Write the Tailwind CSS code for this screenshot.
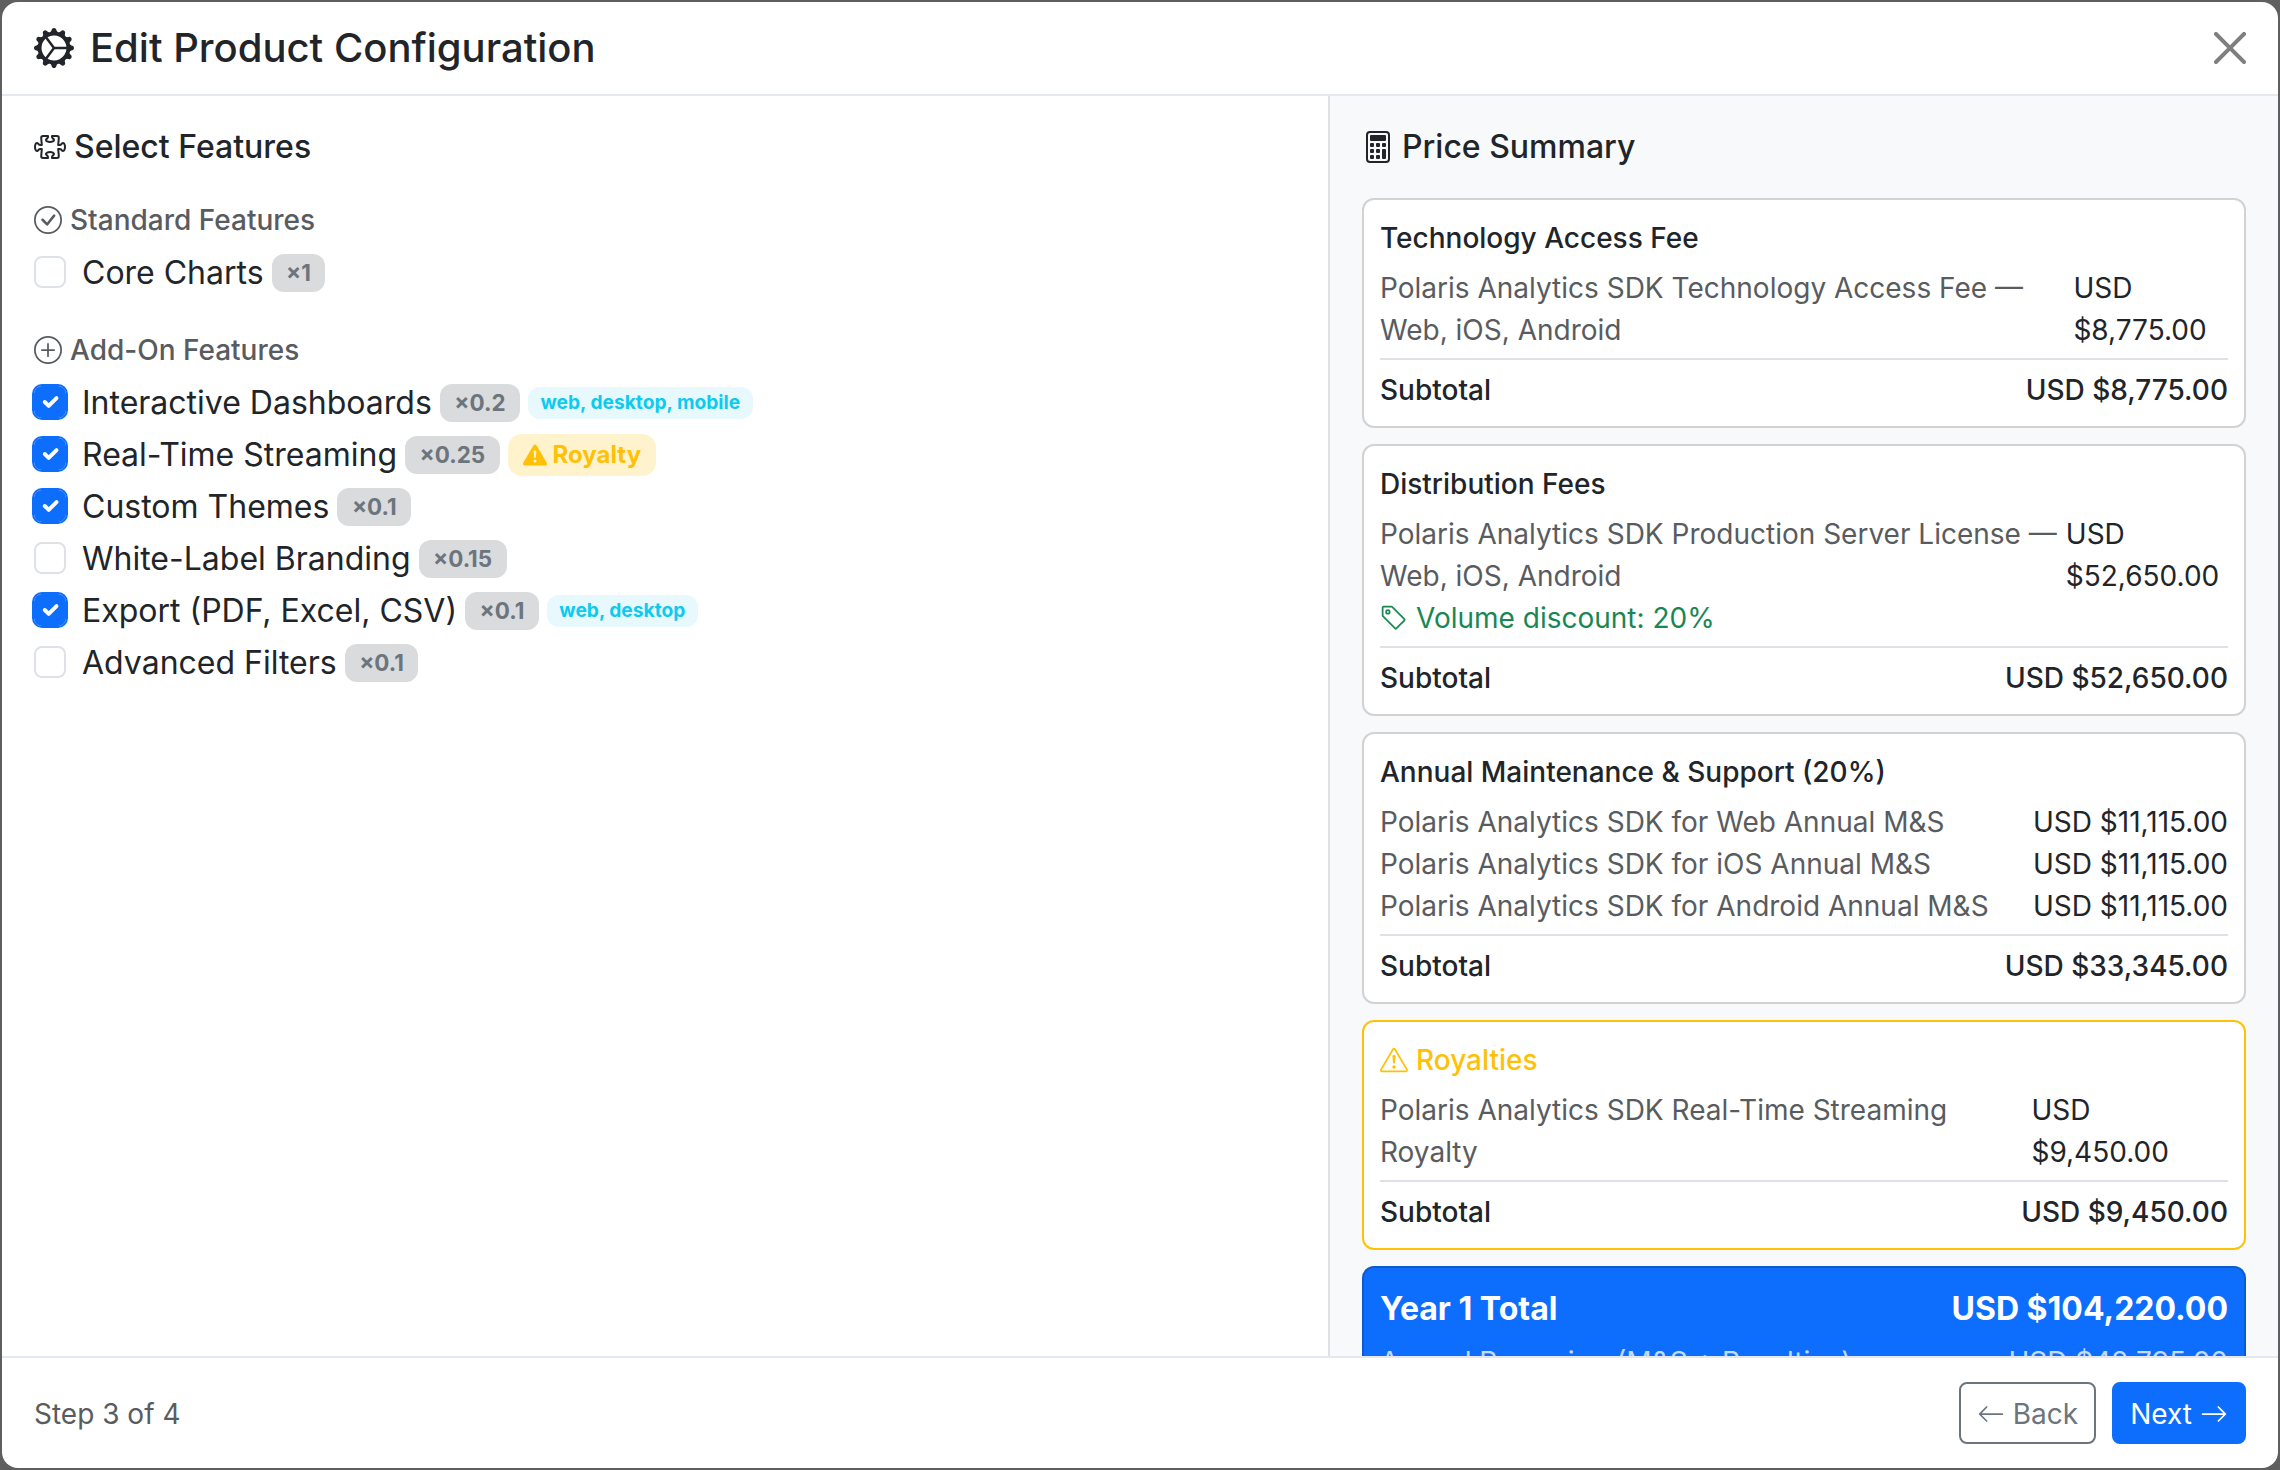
<!DOCTYPE html>
<html lang="en">

<head>
    <meta charset="UTF-8">
    <meta name="viewport" content="width=device-width, initial-scale=1.0">
    <script src="https://cdn.jsdelivr.net/npm/@tailwindcss/browser@4"></script>
    <title>Edit Product Configuration</title>
</head>

<body class="bg-[#5f5f5f] font-['Inter',sans-serif] text-[#212529]">
    <div class="h-[1470px] w-[2280px] p-[2px]">
        <div class="flex h-full flex-col overflow-hidden rounded-[16px] bg-white">

            <!-- header -->
            <header class="flex h-[94px] shrink-0 items-center justify-between border-b-2 border-[#e4e8f1] pl-[32px] pr-[32px]">
                <h1 class="flex items-center gap-[16px] text-[40px] font-medium leading-[48px]">
                    <svg xmlns="http://www.w3.org/2000/svg" class="h-[40px] w-[40px]" viewBox="0 0 16 16" fill="currentColor">
                        <path d="M7.068.727c.243-.97 1.62-.97 1.864 0l.071.286a.96.96 0 0 0 1.622.434l.205-.211c.695-.719 1.888-.03 1.613.931l-.08.284a.96.96 0 0 0 1.187 1.187l.283-.081c.96-.275 1.65.918.931 1.613l-.211.205a.96.96 0 0 0 .434 1.622l.286.071c.97.243.97 1.62 0 1.864l-.286.071a.96.96 0 0 0-.434 1.622l.211.205c.719.695.03 1.888-.931 1.613l-.284-.08a.96.96 0 0 0-1.187 1.187l.081.283c.275.96-.918 1.65-1.613.931l-.205-.211a.96.96 0 0 0-1.622.434l-.071.286c-.243.97-1.62.97-1.864 0l-.071-.286a.96.96 0 0 0-1.622-.434l-.205.211c-.695.719-1.888.03-1.613-.931l.08-.284a.96.96 0 0 0-1.186-1.187l-.284.081c-.96.275-1.65-.918-.931-1.613l.211-.205a.96.96 0 0 0-.434-1.622l-.286-.071c-.97-.243-.97-1.62 0-1.864l.286-.071a.96.96 0 0 0 .434-1.622l-.211-.205c-.719-.695-.03-1.888.931-1.613l.284.08a.96.96 0 0 0 1.187-1.186l-.081-.284c-.275-.96.918-1.65 1.613-.931l.205.211a.96.96 0 0 0 1.622-.434l.071-.286zM12.973 8.5H8.25l-2.834 3.779A4.998 4.998 0 0 0 12.973 8.5zm0-1a4.998 4.998 0 0 0-7.557-3.779l2.834 3.78h4.723zM5.048 3.967c-.03.021-.058.043-.087.065l.087-.065zm-.431.355A4.984 4.984 0 0 0 3.002 8c0 1.455.622 2.765 1.615 3.678L7.375 8 4.617 4.322zm.344 7.646.087.065-.087-.065z" />
                    </svg>
                    Edit Product Configuration
                </h1>
                <button class="text-[#7f7f7f]">
                    <svg xmlns="http://www.w3.org/2000/svg" class="h-[32px] w-[32px]" viewBox="0 0 16 16" fill="currentColor">
                        <path d="M.293.293a1 1 0 0 1 1.414 0L8 6.586 14.293.293a1 1 0 1 1 1.414 1.414L9.414 8l6.293 6.293a1 1 0 0 1-1.414 1.414L8 9.414l-6.293 6.293a1 1 0 0 1-1.414-1.414L6.586 8 .293 1.707a1 1 0 0 1 0-1.414z" />
                    </svg>
                </button>
            </header>

            <div class="flex min-h-0 flex-1">

                <!-- features -->
                <section class="w-[1328px] shrink-0 border-r-2 border-[#dee2e6] p-[32px]">
                    <h2 class="mb-[32px] flex h-[38px] items-center gap-[8px] text-[32px] font-medium">
                        <svg xmlns="http://www.w3.org/2000/svg" class="h-[32px] w-[32px]" viewBox="0 0 16 16" fill="currentColor">
                            <path d="M3.112 3.645A1.5 1.5 0 0 1 4.605 2H7a.5.5 0 0 1 .5.5v.382c0 .696-.497 1.182-.872 1.469a.459.459 0 0 0-.115.118.113.113 0 0 0-.012.025L6.5 4.5v.003l.003.01c.004.01.014.028.036.053a.86.86 0 0 0 .27.194C7.09 4.9 7.51 5 8 5c.492 0 .912-.1 1.19-.24a.86.86 0 0 0 .271-.194.213.213 0 0 0 .039-.063v-.009a.112.112 0 0 0-.012-.025.459.459 0 0 0-.115-.118c-.375-.287-.872-.773-.872-1.469V2.5A.5.5 0 0 1 9 2h2.395a1.5 1.5 0 0 1 1.493 1.645L12.645 6.5h.237c.195 0 .42-.147.675-.48.21-.274.528-.52.943-.52.568 0 .947.447 1.154.862C15.877 6.807 16 7.387 16 8s-.123 1.193-.346 1.638c-.207.415-.586.862-1.154.862-.415 0-.733-.246-.943-.52-.255-.333-.48-.48-.675-.48h-.237l.243 2.855A1.5 1.5 0 0 1 11.395 14H9a.5.5 0 0 1-.5-.5v-.382c0-.696.497-1.182.872-1.469a.459.459 0 0 0 .115-.118.113.113 0 0 0 .012-.025L9.5 11.5v-.003a.214.214 0 0 0-.039-.064.859.859 0 0 0-.27-.193C8.91 11.1 8.49 11 8 11c-.491 0-.912.1-1.19.24a.859.859 0 0 0-.271.194.214.214 0 0 0-.039.063v.003l.001.006a.113.113 0 0 0 .012.025c.016.027.05.068.115.118.375.287.872.773.872 1.469v.382a.5.5 0 0 1-.5.5H4.605a1.5 1.5 0 0 1-1.493-1.645L3.356 9.5h-.238c-.195 0-.42.147-.675.48-.21.274-.528.52-.943.52-.568 0-.947-.447-1.154-.862C.123 9.193 0 8.613 0 8s.123-1.193.346-1.638C.553 5.947.932 5.5 1.5 5.5c.415 0 .733.246.943.52.255.333.48.48.675.48h.238l-.244-2.855zM4.605 3a.5.5 0 0 0-.498.55l.001.007.29 3.4A.5.5 0 0 1 3.9 7.5h-.782c-.696 0-1.182-.497-1.469-.872a.459.459 0 0 0-.118-.115.112.112 0 0 0-.025-.012L1.5 6.5h-.003a.213.213 0 0 0-.064.039.86.86 0 0 0-.193.27C1.1 7.09 1 7.51 1 8c0 .491.1.912.24 1.19.07.14.14.225.194.271a.214.214 0 0 0 .063.039H1.5l.006-.001a.112.112 0 0 0 .025-.012.459.459 0 0 0 .118-.115c.287-.375.773-.872 1.469-.872H3.9a.5.5 0 0 1 .498.542l-.29 3.408a.5.5 0 0 0 .497.55h1.878c-.048-.166-.195-.352-.463-.557-.274-.21-.52-.528-.52-.943 0-.568.447-.947.862-1.154C6.807 10.123 7.387 10 8 10s1.193.123 1.638.346c.415.207.862.586.862 1.154 0 .415-.246.733-.52.943-.268.205-.415.39-.463.557h1.878a.5.5 0 0 0 .498-.55l-.001-.007-.29-3.4A.5.5 0 0 1 12.1 8.5h.782c.696 0 1.182.497 1.469.872.05.065.091.099.118.115.013.008.021.01.025.012a.02.02 0 0 0 .006.001h.003a.214.214 0 0 0 .064-.039.86.86 0 0 0 .193-.27c.14-.28.24-.7.24-1.191 0-.492-.1-.912-.24-1.19a.86.86 0 0 0-.194-.271.215.215 0 0 0-.063-.039H14.5l-.006.001a.113.113 0 0 0-.025.012.459.459 0 0 0-.118.115c-.287.375-.773.872-1.469.872H12.1a.5.5 0 0 1-.498-.543l.29-3.407a.5.5 0 0 0-.497-.55H9.517c.048.166.195.352.463.557.274.21.52.528.52.943 0 .568-.447.947-.862 1.154C9.193 5.877 8.613 6 8 6s-1.193-.123-1.638-.346C5.947 5.447 5.5 5.068 5.5 4.5c0-.415.246-.733.52-.943.268-.205.415-.39.463-.557H4.605z" />
                        </svg>
                        Select Features
                    </h2>

                    <div class="mb-[30px]">
                        <h3 class="mb-[7px] flex items-center gap-[8px] pt-[1px] text-[28px] font-medium leading-[42px] text-[#595c5f]">
                            <svg xmlns="http://www.w3.org/2000/svg" class="h-[28px] w-[28px]" viewBox="0 0 16 16" fill="currentColor">
                                <path d="M8 15A7 7 0 1 1 8 1a7 7 0 0 1 0 14zm0 1A8 8 0 1 0 8 0a8 8 0 0 0 0 16z" />
                                <path d="M10.97 4.97a.235.235 0 0 0-.02.022L7.477 9.417 5.384 7.323a.75.75 0 0 0-1.06 1.06L6.97 11.03a.75.75 0 0 0 1.079-.02l3.992-4.99a.75.75 0 0 0-1.071-1.05z" />
                            </svg>
                            Standard Features
                        </h3>
                        <div class="mb-[2px] flex h-[50px] items-center text-[32px] leading-[48px]">
                            <span class="mb-[2px] mr-[16px] h-[32px] w-[32px] rounded-[8px] border-2 border-[#dee2e6] bg-white"></span>
                            <span>Core Charts</span>
                            <span class="ml-[8px] rounded-[12px] bg-[#d9dbdd] px-[14.5px] py-[7.8px] text-[22.4px] font-bold leading-none text-[#6c757d]">×1</span>
                        </div>
                    </div>

                    <div>
                        <h3 class="mb-[7px] flex items-center gap-[8px] pt-[1px] text-[28px] font-medium leading-[42px] text-[#595c5f]">
                            <svg xmlns="http://www.w3.org/2000/svg" class="h-[28px] w-[28px]" viewBox="0 0 16 16" fill="currentColor">
                                <path d="M8 15A7 7 0 1 1 8 1a7 7 0 0 1 0 14zm0 1A8 8 0 1 0 8 0a8 8 0 0 0 0 16z" />
                                <path d="M8 4a.5.5 0 0 1 .5.5v3h3a.5.5 0 0 1 0 1h-3v3a.5.5 0 0 1-1 0v-3h-3a.5.5 0 0 1 0-1h3v-3A.5.5 0 0 1 8 4z" />
                            </svg>
                            Add-On Features
                        </h3>

                        <div class="mb-[2px] flex h-[50px] items-center text-[32px] leading-[48px]">
                            <span class="mb-[2px] mr-[16px] flex h-[32px] w-[32px] items-center justify-center rounded-[8px] bg-[#0d6efd] outline-2 outline-[#0d6efd]">
                                <svg xmlns="http://www.w3.org/2000/svg" class="h-[26px] w-[26px]" viewBox="0 0 20 20" fill="none" stroke="#fff" stroke-width="3" stroke-linecap="round" stroke-linejoin="round"><path d="m6 10 3 3 6-6" /></svg>
                            </span>
                            <span>Interactive Dashboards</span>
                            <span class="ml-[8px] rounded-[12px] bg-[#d9dbdd] px-[14.5px] py-[7.8px] text-[22.4px] font-bold leading-none text-[#6c757d]">×0.2</span>
                            <span class="ml-[8px] rounded-[12px] bg-[#e7f9fd] px-[12.5px] py-[6.7px] text-[19.2px] font-bold leading-none text-[#0dcaf0]">web, desktop, mobile</span>
                        </div>

                        <div class="mb-[2px] flex h-[50px] items-center text-[32px] leading-[48px]">
                            <span class="mb-[2px] mr-[16px] flex h-[32px] w-[32px] items-center justify-center rounded-[8px] bg-[#0d6efd] outline-2 outline-[#0d6efd]">
                                <svg xmlns="http://www.w3.org/2000/svg" class="h-[26px] w-[26px]" viewBox="0 0 20 20" fill="none" stroke="#fff" stroke-width="3" stroke-linecap="round" stroke-linejoin="round"><path d="m6 10 3 3 6-6" /></svg>
                            </span>
                            <span>Real-Time Streaming</span>
                            <span class="ml-[8px] rounded-[12px] bg-[#d9dbdd] px-[14.5px] py-[7.8px] text-[22.4px] font-bold leading-none text-[#6c757d]">×0.25</span>
                            <span class="ml-[8px] flex items-center gap-[6px] rounded-[14px] bg-[#fff3cd] px-[15px] py-[8px] text-[24px] font-bold leading-[26px] text-[#ffc107]">
                                <svg xmlns="http://www.w3.org/2000/svg" class="h-[24px] w-[24px]" viewBox="0 0 16 16" fill="currentColor">
                                    <path d="M8.982 1.566a1.13 1.13 0 0 0-1.96 0L.165 13.233c-.457.778.091 1.767.98 1.767h13.713c.889 0 1.438-.99.98-1.767L8.982 1.566zM8 5c.535 0 .954.462.9.995l-.35 3.507a.552.552 0 0 1-1.1 0L7.1 5.995A.905.905 0 0 1 8 5zm.002 6a1 1 0 1 1 0 2 1 1 0 0 1 0-2z" />
                                </svg>
                                Royalty
                            </span>
                        </div>

                        <div class="mb-[2px] flex h-[50px] items-center text-[32px] leading-[48px]">
                            <span class="mb-[2px] mr-[16px] flex h-[32px] w-[32px] items-center justify-center rounded-[8px] bg-[#0d6efd] outline-2 outline-[#0d6efd]">
                                <svg xmlns="http://www.w3.org/2000/svg" class="h-[26px] w-[26px]" viewBox="0 0 20 20" fill="none" stroke="#fff" stroke-width="3" stroke-linecap="round" stroke-linejoin="round"><path d="m6 10 3 3 6-6" /></svg>
                            </span>
                            <span>Custom Themes</span>
                            <span class="ml-[8px] rounded-[12px] bg-[#d9dbdd] px-[14.5px] py-[7.8px] text-[22.4px] font-bold leading-none text-[#6c757d]">×0.1</span>
                        </div>

                        <div class="mb-[2px] flex h-[50px] items-center text-[32px] leading-[48px]">
                            <span class="mb-[2px] mr-[16px] h-[32px] w-[32px] rounded-[8px] border-2 border-[#dee2e6] bg-white"></span>
                            <span>White-Label Branding</span>
                            <span class="ml-[8px] rounded-[12px] bg-[#d9dbdd] px-[14.5px] py-[7.8px] text-[22.4px] font-bold leading-none text-[#6c757d]">×0.15</span>
                        </div>

                        <div class="mb-[2px] flex h-[50px] items-center text-[32px] leading-[48px]">
                            <span class="mb-[2px] mr-[16px] flex h-[32px] w-[32px] items-center justify-center rounded-[8px] bg-[#0d6efd] outline-2 outline-[#0d6efd]">
                                <svg xmlns="http://www.w3.org/2000/svg" class="h-[26px] w-[26px]" viewBox="0 0 20 20" fill="none" stroke="#fff" stroke-width="3" stroke-linecap="round" stroke-linejoin="round"><path d="m6 10 3 3 6-6" /></svg>
                            </span>
                            <span>Export (PDF, Excel, CSV)</span>
                            <span class="ml-[8px] rounded-[12px] bg-[#d9dbdd] px-[14.5px] py-[7.8px] text-[22.4px] font-bold leading-none text-[#6c757d]">×0.1</span>
                            <span class="ml-[8px] rounded-[12px] bg-[#e7f9fd] px-[12.5px] py-[6.7px] text-[19.2px] font-bold leading-none text-[#0dcaf0]">web, desktop</span>
                        </div>

                        <div class="mb-[2px] flex h-[50px] items-center text-[32px] leading-[48px]">
                            <span class="mb-[2px] mr-[16px] h-[32px] w-[32px] rounded-[8px] border-2 border-[#dee2e6] bg-white"></span>
                            <span>Advanced Filters</span>
                            <span class="ml-[8px] rounded-[12px] bg-[#d9dbdd] px-[14.5px] py-[7.8px] text-[22.4px] font-bold leading-none text-[#6c757d]">×0.1</span>
                        </div>
                    </div>
                </section>

                <!-- price summary -->
                <aside class="min-w-0 flex-1 overflow-hidden bg-[#f8f9fa] p-[32px]">
                    <h2 class="mb-[32px] flex h-[38px] items-center gap-[8px] text-[32px] font-medium">
                        <svg xmlns="http://www.w3.org/2000/svg" class="h-[32px] w-[32px]" viewBox="0 0 16 16" fill="currentColor">
                            <path d="M12 1a1 1 0 0 1 1 1v12a1 1 0 0 1-1 1H4a1 1 0 0 1-1-1V2a1 1 0 0 1 1-1h8zM4 0a2 2 0 0 0-2 2v12a2 2 0 0 0 2 2h8a2 2 0 0 0 2-2V2a2 2 0 0 0-2-2H4z" />
                            <path d="M4 2.5a.5.5 0 0 1 .5-.5h7a.5.5 0 0 1 .5.5v2a.5.5 0 0 1-.5.5h-7a.5.5 0 0 1-.5-.5v-2zm0 4a.5.5 0 0 1 .5-.5h1a.5.5 0 0 1 .5.5v1a.5.5 0 0 1-.5.5h-1a.5.5 0 0 1-.5-.5v-1zm0 3a.5.5 0 0 1 .5-.5h1a.5.5 0 0 1 .5.5v1a.5.5 0 0 1-.5.5h-1a.5.5 0 0 1-.5-.5v-1zm0 3a.5.5 0 0 1 .5-.5h1a.5.5 0 0 1 .5.5v1a.5.5 0 0 1-.5.5h-1a.5.5 0 0 1-.5-.5v-1zm3-6a.5.5 0 0 1 .5-.5h1a.5.5 0 0 1 .5.5v1a.5.5 0 0 1-.5.5h-1a.5.5 0 0 1-.5-.5v-1zm0 3a.5.5 0 0 1 .5-.5h1a.5.5 0 0 1 .5.5v1a.5.5 0 0 1-.5.5h-1a.5.5 0 0 1-.5-.5v-1zm0 3a.5.5 0 0 1 .5-.5h1a.5.5 0 0 1 .5.5v1a.5.5 0 0 1-.5.5h-1a.5.5 0 0 1-.5-.5v-1zm3-6a.5.5 0 0 1 .5-.5h1a.5.5 0 0 1 .5.5v1a.5.5 0 0 1-.5.5h-1a.5.5 0 0 1-.5-.5v-1zm0 3a.5.5 0 0 1 .5-.5h1a.5.5 0 0 1 .5.5v4a.5.5 0 0 1-.5.5h-1a.5.5 0 0 1-.5-.5v-4z" />
                        </svg>
                        Price Summary
                    </h2>

                    <div class="mb-[16px] rounded-[12px] border-2 border-[#d2d2d2] bg-white px-[16px] pb-[15px] pt-[17px] text-[28px] leading-[42px]">
                        <h3 class="mb-[8px] font-medium">Technology Access Fee</h3>
                        <div class="flex justify-between gap-[4px]">
                            <span class="text-[#595c5f]">Polaris Analytics SDK Technology Access Fee — Web, iOS, Android</span>
                            <span>USD $8,775.00</span>
                        </div>
                        <div class="mt-[7px] flex justify-between border-t-2 border-[#dee2e6] pt-[9px] font-medium">
                            <span>Subtotal</span>
                            <span>USD $8,775.00</span>
                        </div>
                    </div>

                    <div class="mb-[16px] rounded-[12px] border-2 border-[#d2d2d2] bg-white px-[16px] pb-[15px] pt-[17px] text-[28px] leading-[42px]">
                        <h3 class="mb-[8px] font-medium">Distribution Fees</h3>
                        <div class="flex justify-between gap-[4px]">
                            <span class="text-[#595c5f]">Polaris Analytics SDK Production Server License — Web, iOS, Android</span>
                            <span>USD $52,650.00</span>
                        </div>
                        <div class="flex items-center gap-[8px] text-[#198754]">
                            <svg xmlns="http://www.w3.org/2000/svg" class="h-[28px] w-[28px]" viewBox="0 0 16 16" fill="currentColor">
                                <path d="M6 4.5a1.5 1.5 0 1 1-3 0 1.5 1.5 0 0 1 3 0zm-1 0a.5.5 0 1 0-1 0 .5.5 0 0 0 1 0z" />
                                <path d="M2 1h4.586a1 1 0 0 1 .707.293l7 7a1 1 0 0 1 0 1.414l-4.586 4.586a1 1 0 0 1-1.414 0l-7-7A1 1 0 0 1 1 6.586V2a1 1 0 0 1 1-1zm0 5.586 7 7L13.586 9l-7-7H2v4.586z" />
                            </svg>
                            Volume discount: 20%
                        </div>
                        <div class="mt-[7px] flex justify-between border-t-2 border-[#dee2e6] pt-[9px] font-medium">
                            <span>Subtotal</span>
                            <span>USD $52,650.00</span>
                        </div>
                    </div>

                    <div class="mb-[16px] rounded-[12px] border-2 border-[#d2d2d2] bg-white px-[16px] pb-[15px] pt-[17px] text-[28px] leading-[42px]">
                        <h3 class="mb-[8px] font-medium">Annual Maintenance &amp; Support (20%)</h3>
                        <div class="flex justify-between gap-[4px]">
                            <span class="text-[#595c5f]">Polaris Analytics SDK for Web Annual M&amp;S</span>
                            <span>USD $11,115.00</span>
                        </div>
                        <div class="flex justify-between gap-[4px]">
                            <span class="text-[#595c5f]">Polaris Analytics SDK for iOS Annual M&amp;S</span>
                            <span>USD $11,115.00</span>
                        </div>
                        <div class="flex justify-between gap-[4px]">
                            <span class="text-[#595c5f]">Polaris Analytics SDK for Android Annual M&amp;S</span>
                            <span>USD $11,115.00</span>
                        </div>
                        <div class="mt-[7px] flex justify-between border-t-2 border-[#dee2e6] pt-[9px] font-medium">
                            <span>Subtotal</span>
                            <span>USD $33,345.00</span>
                        </div>
                    </div>

                    <div class="mb-[16px] rounded-[12px] border-2 border-[#ffc107] bg-white px-[16px] pb-[15px] pt-[17px] text-[28px] leading-[42px]">
                        <h3 class="mb-[8px] flex items-center gap-[8px] font-medium text-[#ffc107]">
                            <svg xmlns="http://www.w3.org/2000/svg" class="h-[28px] w-[28px]" viewBox="0 0 16 16" fill="currentColor">
                                <path d="M7.938 2.016A.13.13 0 0 1 8.002 2a.13.13 0 0 1 .063.016.146.146 0 0 1 .054.057l6.857 11.667c.036.06.035.124.002.183a.163.163 0 0 1-.054.06.116.116 0 0 1-.066.017H1.146a.115.115 0 0 1-.066-.017.163.163 0 0 1-.054-.06.176.176 0 0 1 .002-.183L7.884 2.073a.147.147 0 0 1 .054-.057zm1.044-.45a1.13 1.13 0 0 0-1.96 0L.165 13.233c-.457.778.091 1.767.98 1.767h13.713c.889 0 1.438-.99.98-1.767L8.982 1.566z" />
                                <path d="M7.002 12a1 1 0 1 1 2 0 1 1 0 0 1-2 0zM7.1 5.995a.905.905 0 1 1 1.8 0l-.35 3.507a.552.552 0 0 1-1.1 0L7.1 5.995z" />
                            </svg>
                            Royalties
                        </h3>
                        <div class="flex justify-between gap-[4px]">
                            <span class="text-[#595c5f]">Polaris Analytics SDK Real-Time Streaming Royalty</span>
                            <span>USD $9,450.00</span>
                        </div>
                        <div class="mt-[7px] flex justify-between border-t-2 border-[#dee2e6] pt-[9px] font-medium">
                            <span>Subtotal</span>
                            <span>USD $9,450.00</span>
                        </div>
                    </div>

                    <div class="rounded-[12px] border-2 border-black/[.175] bg-[#0d6efd] px-[16px] pb-[16px] pt-[17px] text-white">
                        <div class="mb-[8px] flex justify-between text-[32px] font-bold leading-[48px]">
                            <span>Year 1 Total</span>
                            <span>USD $104,220.00</span>
                        </div>
                        <div class="flex justify-between text-[28px] leading-[42px] text-white/75">
                            <span>Annual Recurring (M&amp;S + Royalties)</span>
                            <span>USD $42,795.00</span>
                        </div>
                    </div>
                </aside>
            </div>

            <!-- footer -->
            <footer class="flex h-[112px] shrink-0 items-center justify-between border-t-2 border-[#e4e8f1] px-[32px]">
                <span class="pt-[2px] text-[28px] leading-[42px] text-[#595c5f]">Step 3 of 4</span>
                <div class="flex gap-[16px]">
                    <button class="flex items-center gap-[8px] rounded-[8px] border-2 border-[#6c757d] px-[16px] pb-[7px] pt-[9px] text-[28px] leading-[42px] text-[#6c757d]">
                        <svg xmlns="http://www.w3.org/2000/svg" class="h-[28px] w-[28px]" viewBox="0 0 16 16" fill="currentColor">
                            <path d="M15 8a.5.5 0 0 0-.5-.5H2.707l3.147-3.146a.5.5 0 1 0-.708-.708l-4 4a.5.5 0 0 0 0 .708l4 4a.5.5 0 0 0 .708-.708L2.707 8.5H14.5A.5.5 0 0 0 15 8z" />
                        </svg>
                        Back
                    </button>
                    <button class="flex items-center gap-[8px] rounded-[8px] border-2 border-[#0d6efd] bg-[#0d6efd] px-[16px] pb-[7px] pt-[9px] text-[28px] leading-[42px] text-white">
                        Next
                        <svg xmlns="http://www.w3.org/2000/svg" class="h-[28px] w-[28px]" viewBox="0 0 16 16" fill="currentColor">
                            <path d="M1 8a.5.5 0 0 1 .5-.5h11.793l-3.147-3.146a.5.5 0 0 1 .708-.708l4 4a.5.5 0 0 1 0 .708l-4 4a.5.5 0 0 1-.708-.708L13.293 8.5H1.5A.5.5 0 0 1 1 8z" />
                        </svg>
                    </button>
                </div>
            </footer>
        </div>
    </div>
</body>

</html>
